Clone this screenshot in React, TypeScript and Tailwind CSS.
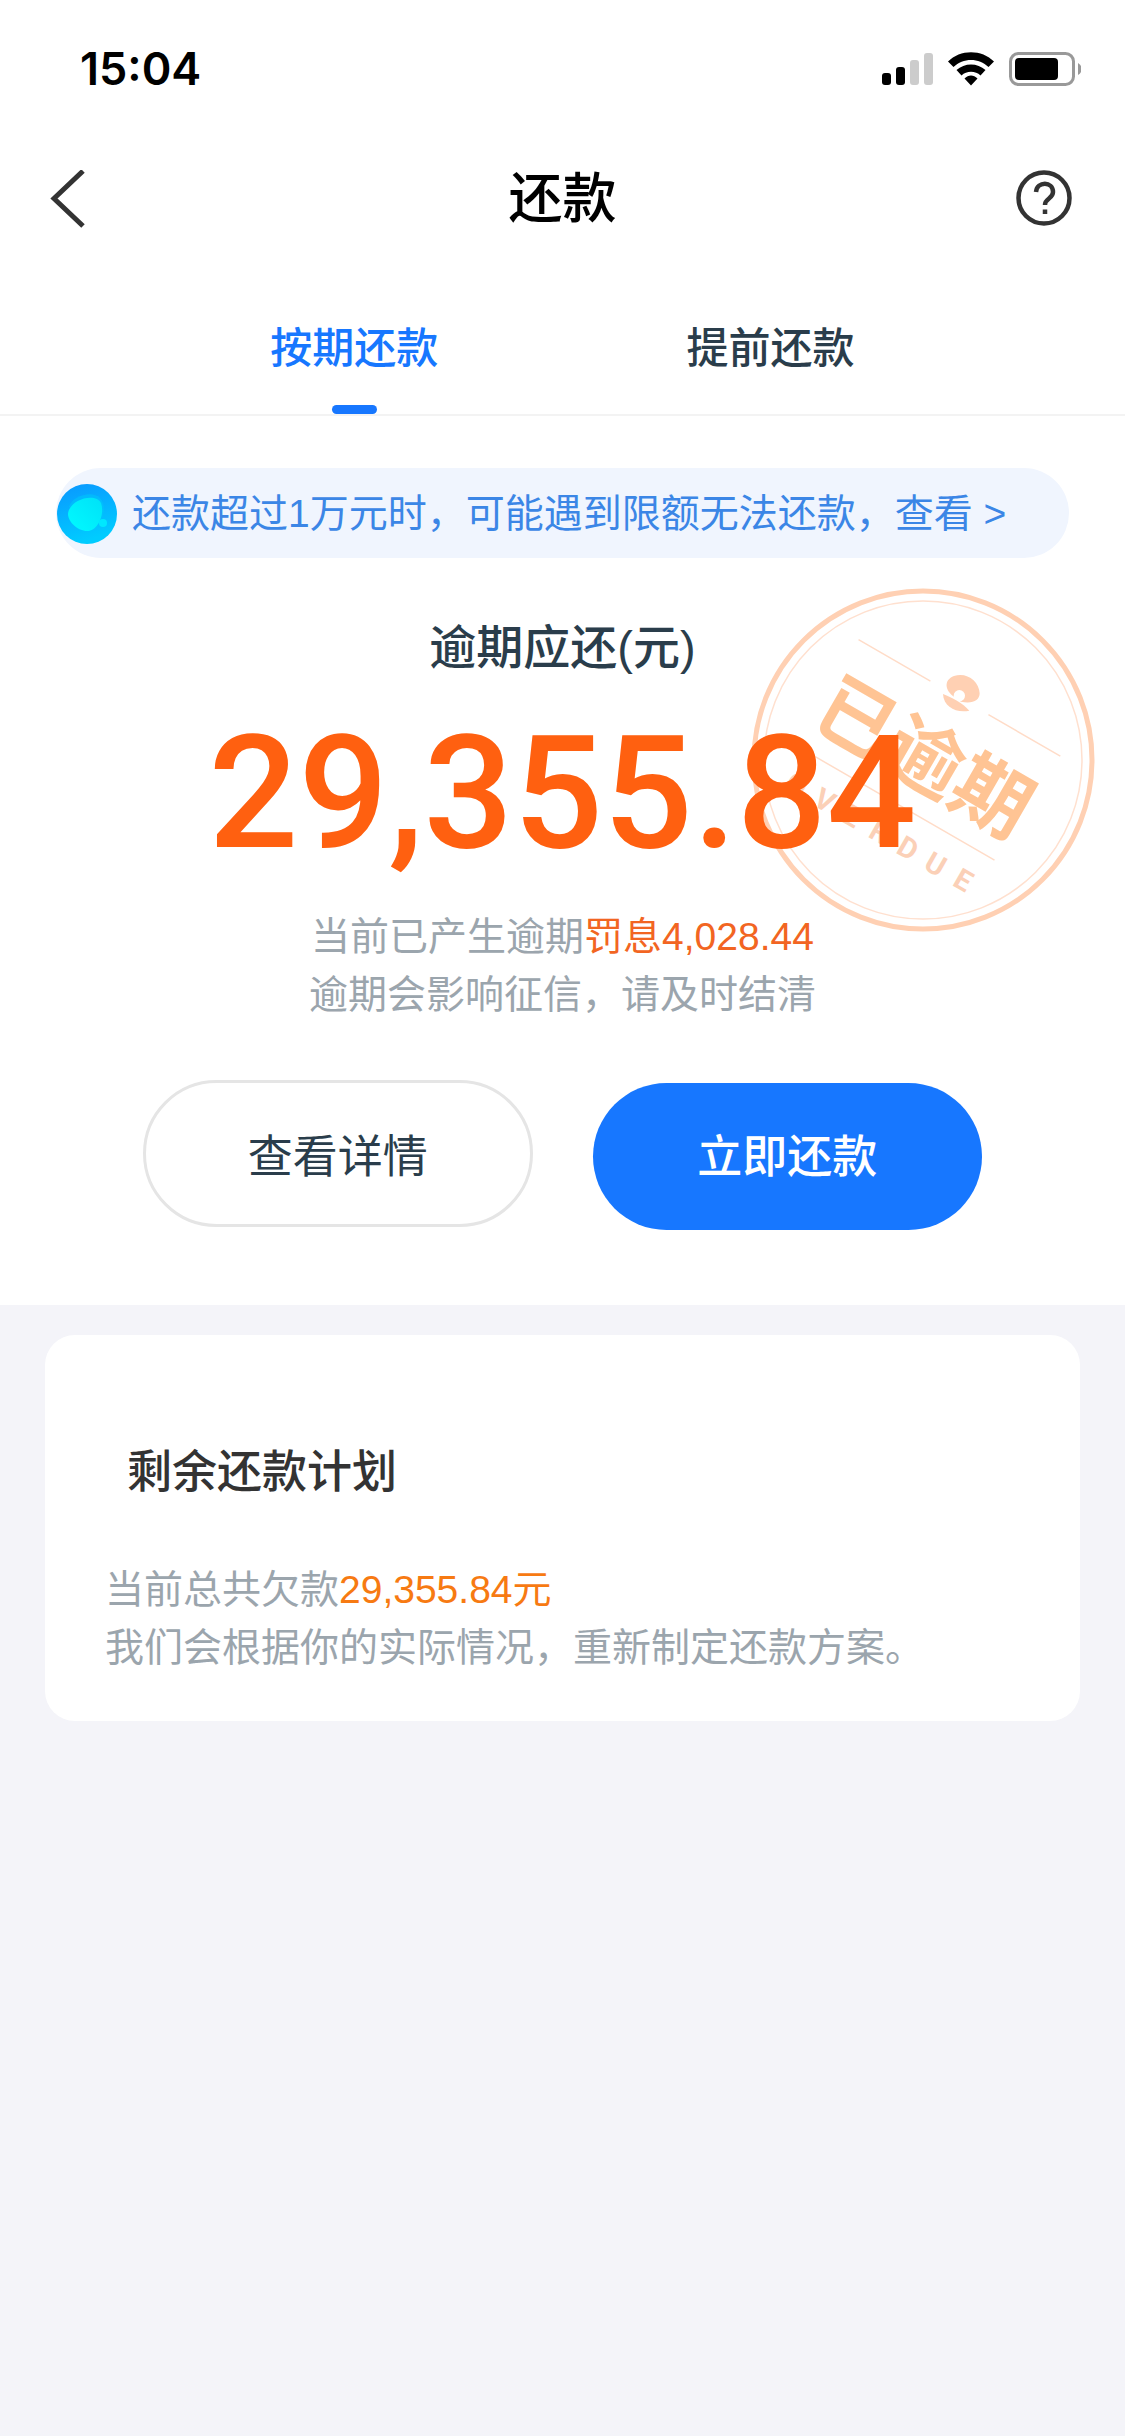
import React from "react";

function StatusBar() {
  return (
    <div className="flex h-[132px] items-center justify-between pl-20 pr-11 pt-[5px]">
      <time className="font-[Inter] text-[45px] font-semibold leading-none text-black">15:04</time>
      <svg width="200" height="36" viewBox="0 0 200 36" role="img" aria-label="信号、无线网络和电池状态" className="shrink-0">
        <rect x="1" y="22" width="9" height="12" rx="3" />
        <rect x="15" y="16" width="9" height="18" rx="3" />
        <rect x="29" y="9" width="9" height="25" rx="3" fill="#ccc" />
        <rect x="43" y="2" width="9" height="32" rx="3" fill="#ccc" />
        <path d="M67 10.500C79-2 101-2 113 10.500l-5.500 5.500C98 6.500 82 6.500 72.500 16ZM75.500 19c8-7.500 21-7.500 29 0l-5 5.500c-5-5-14-5-19 0ZM83.500 27.500c4-4 9-4 13 0L90 34.500Z" />
        <rect x="129.500" y="2.500" width="63" height="31" rx="8" fill="none" stroke="#999" strokeWidth="3" />
        <rect x="134" y="7" width="43" height="22" rx="4" />
        <path d="M197 12c5 3 5 9 0 12Z" fill="#999" />
      </svg>
    </div>
  );
}

function TitleBar() {
  return (
    <header className="flex h-[134px] items-center justify-between px-[50px]">
      <button type="button" aria-label="返回" className="flex w-16 justify-start">
        <svg width="36" height="58" viewBox="0 0 36 58" fill="none" stroke="#333" strokeWidth="5">
          <path d="M33 1 4 28.500 33 56" />
        </svg>
      </button>
      <h1 className="text-[54px] font-medium leading-none text-black">还款</h1>
      <button type="button" aria-label="帮助" className="flex w-16 justify-end">
        <svg width="62" height="58" viewBox="0 0 62 58" fill="none" stroke="#333">
          <circle cx="31" cy="28" r="25.500" strokeWidth="4.500" />
          <path d="M23 22c1-11 17-11 17 0 0 7-8 6-8 13" strokeWidth="4.500" />
          <path d="M32 39.500v4.500" strokeWidth="4.500" />
        </svg>
      </button>
    </header>
  );
}

function Tabs() {
  return (
    <div role="tablist" className="grid h-[150px] grid-cols-2 border-b-2 border-[#f3f3f3] px-[13%] text-[42px] font-medium">
      <button type="button" role="tab" aria-selected="true" className="flex flex-col items-center justify-between pt-[50px] text-[#1777ff]">
        <span className="leading-[66px]">按期还款</span>
        <span className="h-[9px] w-[45px] rounded-full bg-[#1777ff]" />
      </button>
      <button type="button" role="tab" aria-selected="false" className="flex flex-col items-center pt-[50px] text-[#2a3d4b]">
        <span className="leading-[66px]">提前还款</span>
      </button>
    </div>
  );
}

function Notice() {
  return (
    <a href="#limit" className="mx-14 flex h-[90px] items-center gap-[14px] rounded-full bg-[#f0f5fe] pt-[2px] text-[39px] text-[#3b86e6]">
      <svg width="62" height="62" viewBox="0 0 62 62" className="shrink-0" aria-hidden="true">
        <defs>
          <linearGradient id="orb" x1="0" y1="0" x2="0.3" y2="1">
            <stop offset="0" stopColor="#0a96ff" />
            <stop offset="1" stopColor="#00ccff" />
          </linearGradient>
          <linearGradient id="drop" x1="1" y1="0" x2="0" y2="1">
            <stop offset="0" stopColor="#00e1f8" />
            <stop offset="1" stopColor="#00fbff" />
          </linearGradient>
        </defs>
        <circle cx="31" cy="31" r="30" fill="url(#orb)" />
        <path d="M13 24C16 13 36 7 44 15c7 8 4 22-3 28" fill="#00c4fb" opacity="0.6" />
        <path d="M12 31C13 16 40 9 45 20c4 11-3 28-14 28-9 0-19-9-19-17Z" fill="url(#drop)" />
        <circle cx="47" cy="40" r="4" fill="#00e8ff" />
      </svg>
      <span className="whitespace-nowrap">还款超过1万元时，可能遇到限额无法还款，查看 &gt;</span>
    </a>
  );
}

const LETTERS = ["O", "V", "E", "R", "D", "U", "E"];

function OverdueStamp() {
  return (
    <svg width="346" height="346" viewBox="-173 -173 346 346" className="absolute right-[29px] top-[29px]" role="img" aria-label="已逾期">
      <circle r="169" fill="none" stroke="#ffd0b3" strokeWidth="5" />
      <circle r="159" fill="none" stroke="#ffe0cf" strokeWidth="1.500" />
      <g transform="translate(7 -100) scale(0.3333)" fill="#ffd0b3">
        <path d="M72 110C45 92 40 60 72 48c36-13 76 14 77 52 0 22-22 32-56 25Z" />
        <circle cx="88" cy="107" r="17" fill="#fff" />
        <path d="M39 102c22 8 60 28 79 50-38 8-77-10-79-50Z" />
      </g>
      <g transform="rotate(30)">
        <g stroke="#ffdcc8" strokeWidth="1.500">
          <path d="M-116-72h83M34-72h83M-95 51h207" />
        </g>
        <text x="0" y="25" textAnchor="middle" fontSize="78" fontWeight="700" fill="#ffc494">已逾期</text>
        <g fontSize="29" fontWeight="700" fill="#fbd0b7" textAnchor="middle" fontFamily="Liberation Sans Narrow, Roboto">
          {LETTERS.map((c, i) => (
            <text key={i} x={-97 + i * 32} y="94">{c}</text>
          ))}
        </g>
      </g>
    </svg>
  );
}

function OverdueSummary() {
  return (
    <section className="relative flex flex-col items-center pb-[75px] pt-[60px]">
      <OverdueStamp />
      <h2 className="relative text-[47px] font-medium leading-[60px] text-[#2a3d4b]">逾期应还(元)</h2>
      <p className="relative mt-5 font-[Roboto] text-[158px] font-medium leading-[190px] text-[#ff6010]">29,355.84</p>
      <p className="relative mt-5 text-center text-[39px] leading-[58px] text-[#9ba5ad]">
        当前已产生逾期<span className="text-[#f26522]">罚息4,028.44</span>
        <br />
        逾期会影响征信，请及时结清
      </p>
      <div className="mt-14 grid w-full grid-cols-2 items-start gap-[60px] px-[143px] text-[45px]">
        <button type="button" className="h-[147px] rounded-full border-[3px] border-[#e5e5e5] pt-[9px] text-[#2a3d4b]">查看详情</button>
        <button type="button" className="mt-[3px] h-[147px] rounded-full bg-[#1777ff] pt-[3px] font-medium text-white">立即还款</button>
      </div>
    </section>
  );
}

function PlanCard() {
  return (
    <section className="mx-[45px] mt-[30px] rounded-[30px] bg-white px-[60px] pb-11 pt-[108px]">
      <h2 className="pl-[22px] text-[45px] font-medium leading-[60px] text-[#333]">剩余还款计划</h2>
      <p className="mt-[58px] text-[39px] leading-[58px] text-[#9ba5ad]">
        当前总共欠款<span className="text-[#f77a12]">29,355.84元</span>
        <br />
        我们会根据你的实际情况，重新制定还款方案。
      </p>
    </section>
  );
}

export default function App() {
  return (
    <div className="min-h-screen bg-[#f4f4f9] font-['Liberation_Sans','Noto_Sans_CJK_SC',sans-serif]">
      <div className="bg-white">
        <StatusBar />
        <TitleBar />
        <Tabs />
        <main className="pt-[52px]">
          <Notice />
          <OverdueSummary />
        </main>
      </div>
      <PlanCard />
    </div>
  );
}
